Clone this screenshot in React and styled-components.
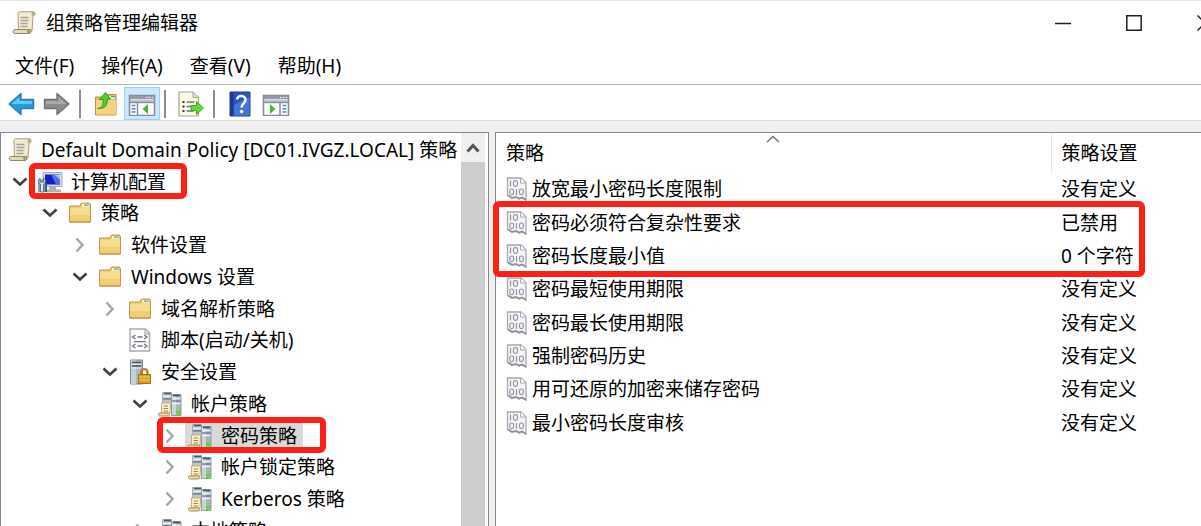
import React, { useState } from "react"
import styled, { createGlobalStyle, css } from "styled-components"

const GlobalStyle = createGlobalStyle`
  * {
    box-sizing: border-box;
  }
  body {
    margin: 0;
    overflow: hidden;
    background: #f0f0f0;
    color: #000;
    font-family: "Noto Sans", "Noto Sans CJK SC", sans-serif;
    font-size: 19px;
    line-height: 26px;
  }
  button {
    padding: 0;
    border: none;
    background: none;
    color: inherit;
    font: inherit;
  }
  svg {
    display: block;
    flex: none;
  }
`

const Window = styled.div`
  display: flex;
  flex-direction: column;
  height: 100vh;
  overflow: hidden;
`

const TitleBar = styled.header`
  display: flex;
  align-items: center;
  height: 45px;
  padding-left: 12px;
  border-top: 1px solid #e8e8e8;
  background: #fff;
  overflow: hidden;
`

const Title = styled.h1`
  flex: 1;
  margin: 0;
  padding-left: 10px;
  font-size: 19px;
  font-weight: 400;
`

const Controls = styled.div`
  display: flex;
  margin-right: -39px;
`

const ControlButton = styled.button`
  display: flex;
  align-items: center;
  justify-content: center;
  width: 71px;
  height: 42px;
`

const MenuBar = styled.nav`
  display: flex;
  align-items: center;
  gap: 27px;
  height: 40px;
  padding: 2px 0 0 15px;
  border-bottom: 1px solid #b4b4b4;
  background: #fff;
`

const MenuButton = styled.button`
  white-space: nowrap;
`

const ToolBar = styled.div`
  display: flex;
  align-items: center;
  height: 36px;
  padding: 2px 0 0 3px;
  border-bottom: 1px solid #dcdcdc;
  background: #fff;
`

const ToolButton = styled.button`
  display: flex;
  align-items: center;
  justify-content: center;
  width: 36px;
  height: 33px;
  ${p =>
    p.$active &&
    css`
      border: 1px solid #99d1ff;
      background: #cce8ff;
    `}
`

const Separator = styled.span`
  width: 2px;
  height: 28px;
  margin: 0 7px 0 4px;
  background: #8c8c8c;
`

const Panes = styled.main`
  display: flex;
  flex: 1;
  gap: 6px;
  min-height: 0;
  padding-top: 11px;
`

const TreePane = styled.section`
  display: flex;
  flex: none;
  width: 489px;
  border: 1px solid #828790;
  border-bottom: none;
  background: #fff;
`

const Tree = styled.ul`
  flex: 1;
  min-width: 0;
  margin: 0;
  padding: 1px 0 0;
  overflow: hidden;
  list-style: none;
`

const TreeRow = styled.li`
  position: relative;
  display: flex;
  align-items: center;
  height: 32px;
  padding-left: ${p => p.$level * 30}px;
  margin-left: -23px;
  white-space: nowrap;
  &:nth-child(4n + 2) {
    height: 31px;
  }
`

const Toggle = styled.button`
  display: flex;
  flex: none;
  align-items: center;
  justify-content: center;
  width: 24px;
  height: 24px;
  margin-right: 3px;
`

const TreeLabel = styled.span`
  display: flex;
  flex: none;
  align-items: center;
  gap: 8px;
  padding: 0 6px 0 2px;
  background: ${p => (p.$selected ? "#d9d9d9" : "transparent")};
`

// fixed icon slot, so that all labels of one level line up
const IconSlot = styled.span`
  display: flex;
  justify-content: center;
  width: 26px;
`

const ScrollBar = styled.div`
  flex: none;
  width: 27px;
  padding-right: 3px;
  background: #cdcdcd;
  background-clip: content-box;
`

const ScrollUp = styled.button`
  display: flex;
  align-items: center;
  justify-content: center;
  width: 100%;
  height: 29px;
  background: #f0f0f0;
`

const PolicyPane = styled.section`
  position: relative;
  flex: 1;
  min-width: 0;
  border: 1px solid #828790;
  border-width: 1px 0 0 1px;
  background: #fff;
`

const PolicyTable = styled.table`
  width: 100%;
  border-collapse: collapse;
  table-layout: fixed;
`

const HeadCell = styled.th`
  position: relative;
  width: ${p => p.$width || "auto"};
  height: 39px;
  padding: 0 0 0 10px;
  border-left: ${p => (p.$width ? "1px solid #e5e5e5" : "none")};
  font-weight: 400;
  text-align: left;
`

const SortMark = styled.span`
  position: absolute;
  top: 2px;
  left: 50%;
  transform: translateX(-50%);
`

const PolicyRow = styled.tr`
  height: 33px;
  &:nth-child(3n + 1) {
    height: 34px;
  }
`

const Cell = styled.td`
  padding: 0 0 0 10px;
  white-space: nowrap;
`

const PolicyName = styled.span`
  display: flex;
  align-items: center;
  gap: 4px;
`

const Marker = styled.span`
  position: absolute;
  border: 6px solid #ff2015;
  border-radius: 6px;
  pointer-events: none;
`

const NodeMarker = styled(Marker)`
  top: -3px;
  bottom: -2px;
  left: ${p => p.$left}px;
  width: ${p => p.$width}px;
`

const ListMarker = styled(Marker)`
  top: 68px;
  left: -3px;
  right: 56px;
  height: 76px;
`

const Chevron = ({ open }) =>
  open ? (
    <svg width="16" height="10" viewBox="0 0 16 10" fill="none">
      <path d="M1.5 1.5 8 7.5l6.500-6" stroke="#404040" strokeWidth="2.600" />
    </svg>
  ) : (
    <svg width="10" height="16" viewBox="0 0 10 16" fill="none">
      <path d="m1.500 1.500 6 6.500-6 6.500" stroke="#a6a6a6" strokeWidth="2.400" />
    </svg>
  )

const ScrollArrow = () => (
  <svg width="14" height="12" viewBox="0 0 14 12" fill="none">
    <path d="m1.500 9.500 5.500-6 5.500 6" stroke="#555" strokeWidth="3" />
  </svg>
)

const SortArrow = () => (
  <svg width="14" height="8" viewBox="0 0 14 8" fill="none">
    <path d="m1 7 6-5.500L13 7" stroke="#7a7a7a" strokeWidth="1.600" />
  </svg>
)

const ScrollPaper = () => (
  <svg width="24" height="24" viewBox="0 0 24 24">
    <path d="M6 2.500C6 1.200 7 .8 8 .8h13c1.500 0 2.200 1 2 2.500-.1 1-.8 1.500-2 1.500l-1 15H6.500z" fill="#f3ead0" stroke="#aa9c7c" />
    <path d="M19.500 2.500c0-1 .8-1.600 1.600-1.600 1.200 0 2 .8 1.900 2.100-.1 1.200-.8 1.700-2.200 1.700h-1.300z" fill="#b8ab8d" />
    <path d="M3 18.500h13.500c-1 1.500-.7 3.500 1 4H3.200C.3 22.500.5 18.500 3 18.500z" fill="#e5d9b5" stroke="#91856a" />
    <path d="M17.500 18c2 .2 2.400 3.500 0 4.500-2-.5-2.200-3.500-.5-4" fill="#b4a786" stroke="#91856a" />
    <path d="M8.500 6.500h8M8.500 9.500h8M8.500 12.500h7M8.500 15.500h7" stroke="#a5a29a" strokeWidth="1.300" />
  </svg>
)

const Folder = () => (
  <svg width="24" height="24" viewBox="0 0 24 24">
    <path d="M1.500 5h10l2-3h8l1 1.500V21h-21z" fill="#e6bf66" stroke="#c39b48" />
    <path d="M14 3h7v3h-7z" fill="#fff6db" />
    <path d="M16 3.500h4.500v1.300H16z" fill="#4da3da" />
    <path d="M2 6.500h10.500l1.500-1h8V20.500H2z" fill="#f8db8d" />
    <path d="M2 14h20v6.500H2z" fill="#f2cd77" />
    <path d="M1.500 21h21" stroke="#b98e3d" />
  </svg>
)

const Computer = () => (
  <svg width="26" height="24" viewBox="0 0 26 24">
    <path d="M6 2.500h19v14H6z" fill="#d7dadd" stroke="#a8adb0" />
    <path d="M8 4.500h15v10H8z" fill="#1022c4" />
    <path d="M14 4.500h9v10h-4z" fill="#4b72e8" />
    <path d="m17 4.500 6 5v-5z" fill="#a4c1fa" />
    <path d="M12 17h7v2.500h5V22H10v-2.500h2z" fill="#aeb2b5" />
    <path d="M1 9.500h7V22H1z" fill="#8f999f" />
    <path d="M3 8v4h3.500V8C9 9.500 9 13 6.500 14v8h-3v-8C1 13 .7 9.500 3 8z" fill="#d8e7f1" stroke="#52738c" />
    <path d="M8 13h2v9H8z" fill="#285e91" />
  </svg>
)

const Script = () => (
  <svg width="24" height="24" viewBox="0 0 24 24">
    <path d="M2 1h15.500L21.500 5v18H2z" fill="#fbfbfc" stroke="#a7a9ad" strokeWidth="1.400" />
    <path d="M17 1v5h4.500" fill="#e0e1e4" stroke="#a7a9ad" />
    <path d="m7.500 7-3 2 3 2M16 7l3 2-3 2M9.500 9h5M6 13.700h12M7.500 16l-3 2 3 2M16 16l3 2-3 2M9.500 18h5" fill="none" stroke="#74747f" strokeWidth="1.300" />
  </svg>
)

const ServerLock = () => (
  <svg width="24" height="26" viewBox="0 0 24 26">
    <path d="M2.500 1h12v24h-12z" fill="#a9b9c3" stroke="#7e8d96" />
    <path d="M3 1.500h5V25H3z" fill="#c5d1d8" />
    <path d="M4 3.500h9M4 7h9" stroke="#43515b" strokeWidth="1.500" />
    <path d="M4 5.200h9M4 9h9" stroke="#eef4f7" />
    <path d="M13 16v-2.500c0-4.500 6.500-4.500 6.500 0V16" fill="none" stroke="#b7881d" strokeWidth="2.400" />
    <path d="M10.500 15.500h12v9h-12z" fill="#d6a01f" stroke="#9e7211" />
    <path d="M11 18h11M11 21h11" stroke="#f3cf59" strokeWidth="1.200" />
  </svg>
)

const ServerPolicy = () => (
  <svg width="24" height="26" viewBox="0 0 24 26">
    <path d="M4.500 1.500h9v16h-9z" fill="#b9c6cd" stroke="#a3afb6" />
    <path d="M13.500 3.500h9.500v21h-9.500z" fill="#a5b4bd" stroke="#8d9aa2" />
    <path d="M14 4h4v20h-4z" fill="#cbd5da" />
    <path d="M6 2.500h7M15 4.500h7" stroke="#45525b" strokeWidth="1.600" />
    <path d="M5 7.800h8M14 10h8.500" stroke="#5b6a74" strokeWidth="1.200" />
    <path d="M5 5.500h8M14 7.500h8.500M14 12.500h8.500" stroke="#edf4f7" strokeWidth="1.500" />
    <path d="M3.500 12h9l-.5 10H3.500z" fill="#fff0cb" stroke="#c9ae78" />
    <path d="M1 22h9.500c1.800 0 1.800 3 0 3H1.500C0 24.500 0 22.500 1 22z" fill="#ecd8a8" stroke="#a58d5f" />
    <path d="M5.500 15H10M5.500 17.500H10M5.500 20H10" stroke="#a18559" />
    <circle cx="20" cy="21.500" r="2.200" fill="#4fe51d" />
  </svg>
)

const PolicyIcon = () => (
  <svg width="22" height="24" viewBox="0 0 22 24" fill="none">
    <path d="M1.500 1h13.500l5 4.500V23l-3.500-2.500-3 1.500-3-1.500H6L1.500 18z" fill="#f5f5f7" stroke="#a6a8ac" strokeWidth="1.300" />
    <path d="M14.500 1v5h5.500" fill="#fff" stroke="#a6a8ac" />
    <path d="M2 18.500 6 21l4-1 3 1.500 3-1 4 2.500" stroke="#909397" strokeWidth="1.800" />
    <g stroke="#9292aa" strokeWidth="1.200">
      <path d="M4.500 3.500v6M10.500 12v6" />
      <rect x="7.500" y="3.700" width="4" height="5.600" rx="1.800" />
      <rect x="3.800" y="12" width="3.800" height="5.600" rx="1.800" />
      <rect x="13.500" y="12" width="3.800" height="5.600" rx="1.800" />
    </g>
  </svg>
)

const Arrow = ({ forward }) => (
  <svg width="28" height="26" viewBox="0 0 28 26">
    {forward ? (
      <>
        <path d="M1.500 8.500H14V2.500L26 13 14 23.500v-6H1.500z" fill="#8c8c8c" stroke="#737373" strokeWidth="1.400" strokeLinejoin="round" />
        <path d="M3 10h12.500V6l8 7H3z" fill="#a9a9a9" />
      </>
    ) : (
      <>
        <path d="M26.500 8.500H14V2.500L2 13l12 10.500v-6h12.500z" fill="#229be0" stroke="#327daf" strokeWidth="1.400" strokeLinejoin="round" />
        <path d="M25 10H12.500V6l-8 7H25z" fill="#61c8fb" />
      </>
    )}
  </svg>
)

const FolderUp = () => (
  <svg width="24" height="26" viewBox="0 0 24 26">
    <path d="M1.500 6h10l2-2.500h8.500V24H1.500z" fill="#e4bd66" stroke="#b98f43" />
    <path d="M14 5h7v3h-7z" fill="#fff1c7" />
    <path d="M17 5h4v1.300h-4z" fill="#4d9ed0" />
    <path d="M2 9h20v14.500H2z" fill="#f5d382" />
    <path d="M3.500 17.500c5-.5 6-4.500 5.500-9H5.500L11.500 1.500l5 6.500h-3.200c.3 6-2 10-9.800 9.500z" fill="#50ce32" stroke="#2c9a21" />
  </svg>
)

const PaneWindow = ({ right }) => (
  <svg width="28" height="24" viewBox="0 0 28 24">
    <path d="M1.500 3.500h25v20h-25z" fill="#fff" stroke="#858d98" strokeWidth="1.600" />
    <path d="M2 4h24v3H2z" fill="#949ba7" />
    <path d="M18 5.500h1.500M21 5.500h1.500M24 5.500h1" stroke="#fff" />
    <path d="M2 7.500h24v2.500H2z" fill="#bfc3cb" />
    <path d="M2 10.500h24" stroke="#858d98" strokeWidth="1.400" />
    {right ? (
      <>
        <path d="M18 11v12" stroke="#858d98" strokeWidth="1.500" />
        <path d="M20.500 13.500h4M20.500 16.700h4M20.500 20h4" stroke="#5688c3" strokeWidth="1.500" />
        <path d="m8 12 5.500 5-5.500 5z" fill="#4ab435" />
      </>
    ) : (
      <>
        <path d="M9.500 11v12" stroke="#858d98" strokeWidth="1.500" />
        <path d="M3.500 13.500h4M3.500 16.700h4M3.500 20h4" stroke="#5688c3" strokeWidth="1.500" />
        <path d="M20 12l-5.500 5 5.500 5z" fill="#4ab435" />
      </>
    )}
  </svg>
)

const ExportList = () => (
  <svg width="28" height="28" viewBox="0 0 28 28">
    <path d="M2 2h14l5.500 5.500V26H2z" fill="#fdfae7" stroke="#aaa48f" strokeWidth="1.200" />
    <path d="M16 2v5.500h5.500" fill="#e4e1d0" stroke="#aaa48f" />
    <path d="M5.500 12h2M5.500 16.500h2M5.500 21h2" stroke="#333" strokeWidth="1.800" />
    <path d="M9.500 12h8M9.500 16.500h6M9.500 21h7" stroke="#777580" strokeWidth="1.400" />
    <path d="M14 15.500h5.500V11.500l7 6.500-7 6.500v-4H14z" fill="#64d83d" stroke="#3dab29" />
  </svg>
)

const Help = () => (
  <svg width="22" height="26" viewBox="0 0 22 26">
    <path d="M1 1h20v24H1z" fill="#2854c4" stroke="#263f86" />
    <path d="M1.500 1.500h3v23h-3z" fill="#1c3994" />
    <path d="M5 14 20.500 6v18.500H5z" fill="#4776db" />
    <path d="M8 8.500c.5-5 9-4.500 8.500.5-.3 3.500-3.800 3.500-3.800 7.500" fill="none" stroke="#fff" strokeWidth="2.500" />
    <circle cx="12.600" cy="20.500" r="1.700" fill="#fff" />
  </svg>
)

const nodes = [
  { level: 0, icon: ScrollPaper, text: "Default Domain Policy [DC01.IVGZ.LOCAL] 策略" },
  { level: 1, icon: Computer, text: "计算机配置", open: true, marker: [51, 158] },
  { level: 2, icon: Folder, text: "策略", open: true },
  { level: 3, icon: Folder, text: "软件设置", open: false },
  { level: 3, icon: Folder, text: "Windows 设置", open: true },
  { level: 4, icon: Folder, text: "域名解析策略", open: false },
  { level: 4, icon: Script, text: "脚本(启动/关机)" },
  { level: 4, icon: ServerLock, text: "安全设置", open: true },
  { level: 5, icon: ServerPolicy, text: "帐户策略", open: true },
  { level: 6, icon: ServerPolicy, text: "密码策略", open: false, marker: [179, 169] },
  { level: 6, icon: ServerPolicy, text: "帐户锁定策略", open: false },
  { level: 6, icon: ServerPolicy, text: "Kerberos 策略", open: false },
  { level: 5, icon: ServerPolicy, text: "本地策略", open: false }
]

const policies = [
  ["放宽最小密码长度限制", "没有定义"],
  ["密码必须符合复杂性要求", "已禁用"],
  ["密码长度最小值", "0 个字符"],
  ["密码最短使用期限", "没有定义"],
  ["密码最长使用期限", "没有定义"],
  ["强制密码历史", "没有定义"],
  ["用可还原的加密来储存密码", "没有定义"],
  ["最小密码长度审核", "没有定义"]
]

const menus = ["文件(F)", "操作(A)", "查看(V)", "帮助(H)"]

const App = () => {
  const [selected, setSelected] = useState("密码策略")

  return (
    <Window>
      <GlobalStyle />
      <TitleBar>
        <ScrollPaper />
        <Title>组策略管理编辑器</Title>
        <Controls>
          <ControlButton aria-label="最小化">
            <svg width="16" height="16" viewBox="0 0 16 16">
              <path d="M0 8.500h16" stroke="#222" strokeWidth="1.500" />
            </svg>
          </ControlButton>
          <ControlButton aria-label="最大化">
            <svg width="16" height="16" viewBox="0 0 16 16">
              <path d="M.8.8h14.400v14.400H.8z" fill="none" stroke="#222" strokeWidth="1.500" />
            </svg>
          </ControlButton>
          <ControlButton aria-label="关闭">
            <svg width="16" height="16" viewBox="0 0 16 16">
              <path d="m.5.5 15 15M15.500.5l-15 15" stroke="#222" strokeWidth="1.500" />
            </svg>
          </ControlButton>
        </Controls>
      </TitleBar>
      <MenuBar>
        {menus.map(menu => (
          <MenuButton key={menu}>{menu}</MenuButton>
        ))}
      </MenuBar>
      <ToolBar>
        <ToolButton aria-label="后退">
          <Arrow />
        </ToolButton>
        <ToolButton aria-label="前进">
          <Arrow forward />
        </ToolButton>
        <Separator />
        <ToolButton aria-label="上移一级">
          <FolderUp />
        </ToolButton>
        <ToolButton aria-label="显示控制台树" $active>
          <PaneWindow />
        </ToolButton>
        <Separator />
        <ToolButton aria-label="导出列表">
          <ExportList />
        </ToolButton>
        <Separator />
        <ToolButton aria-label="帮助">
          <Help />
        </ToolButton>
        <ToolButton aria-label="显示操作窗格">
          <PaneWindow right />
        </ToolButton>
      </ToolBar>
      <Panes>
        <TreePane>
          <Tree>
            {nodes.map(({ level, icon: Icon, text, open, marker }) => (
              <TreeRow key={text} $level={level}>
                <Toggle
                  as={open === undefined ? "span" : "button"}
                  aria-label={open === undefined ? undefined : text}
                >
                  {open !== undefined && <Chevron open={open} />}
                </Toggle>
                <TreeLabel
                  $selected={selected === text}
                  onClick={() => setSelected(text)}
                >
                  <IconSlot>
                    <Icon />
                  </IconSlot>
                  {text}
                </TreeLabel>
                {marker && <NodeMarker $left={marker[0]} $width={marker[1]} />}
              </TreeRow>
            ))}
          </Tree>
          <ScrollBar>
            <ScrollUp aria-label="向上滚动">
              <ScrollArrow />
            </ScrollUp>
          </ScrollBar>
        </TreePane>
        <PolicyPane>
          <PolicyTable>
            <thead>
              <tr>
                <HeadCell>
                  策略
                  <SortMark>
                    <SortArrow />
                  </SortMark>
                </HeadCell>
                <HeadCell $width="150px">策略设置</HeadCell>
              </tr>
            </thead>
            <tbody>
              {policies.map(([name, setting]) => (
                <PolicyRow key={name}>
                  <Cell>
                    <PolicyName>
                      <PolicyIcon />
                      {name}
                    </PolicyName>
                  </Cell>
                  <Cell>{setting}</Cell>
                </PolicyRow>
              ))}
            </tbody>
          </PolicyTable>
          <ListMarker />
        </PolicyPane>
      </Panes>
    </Window>
  )
}

export default App
